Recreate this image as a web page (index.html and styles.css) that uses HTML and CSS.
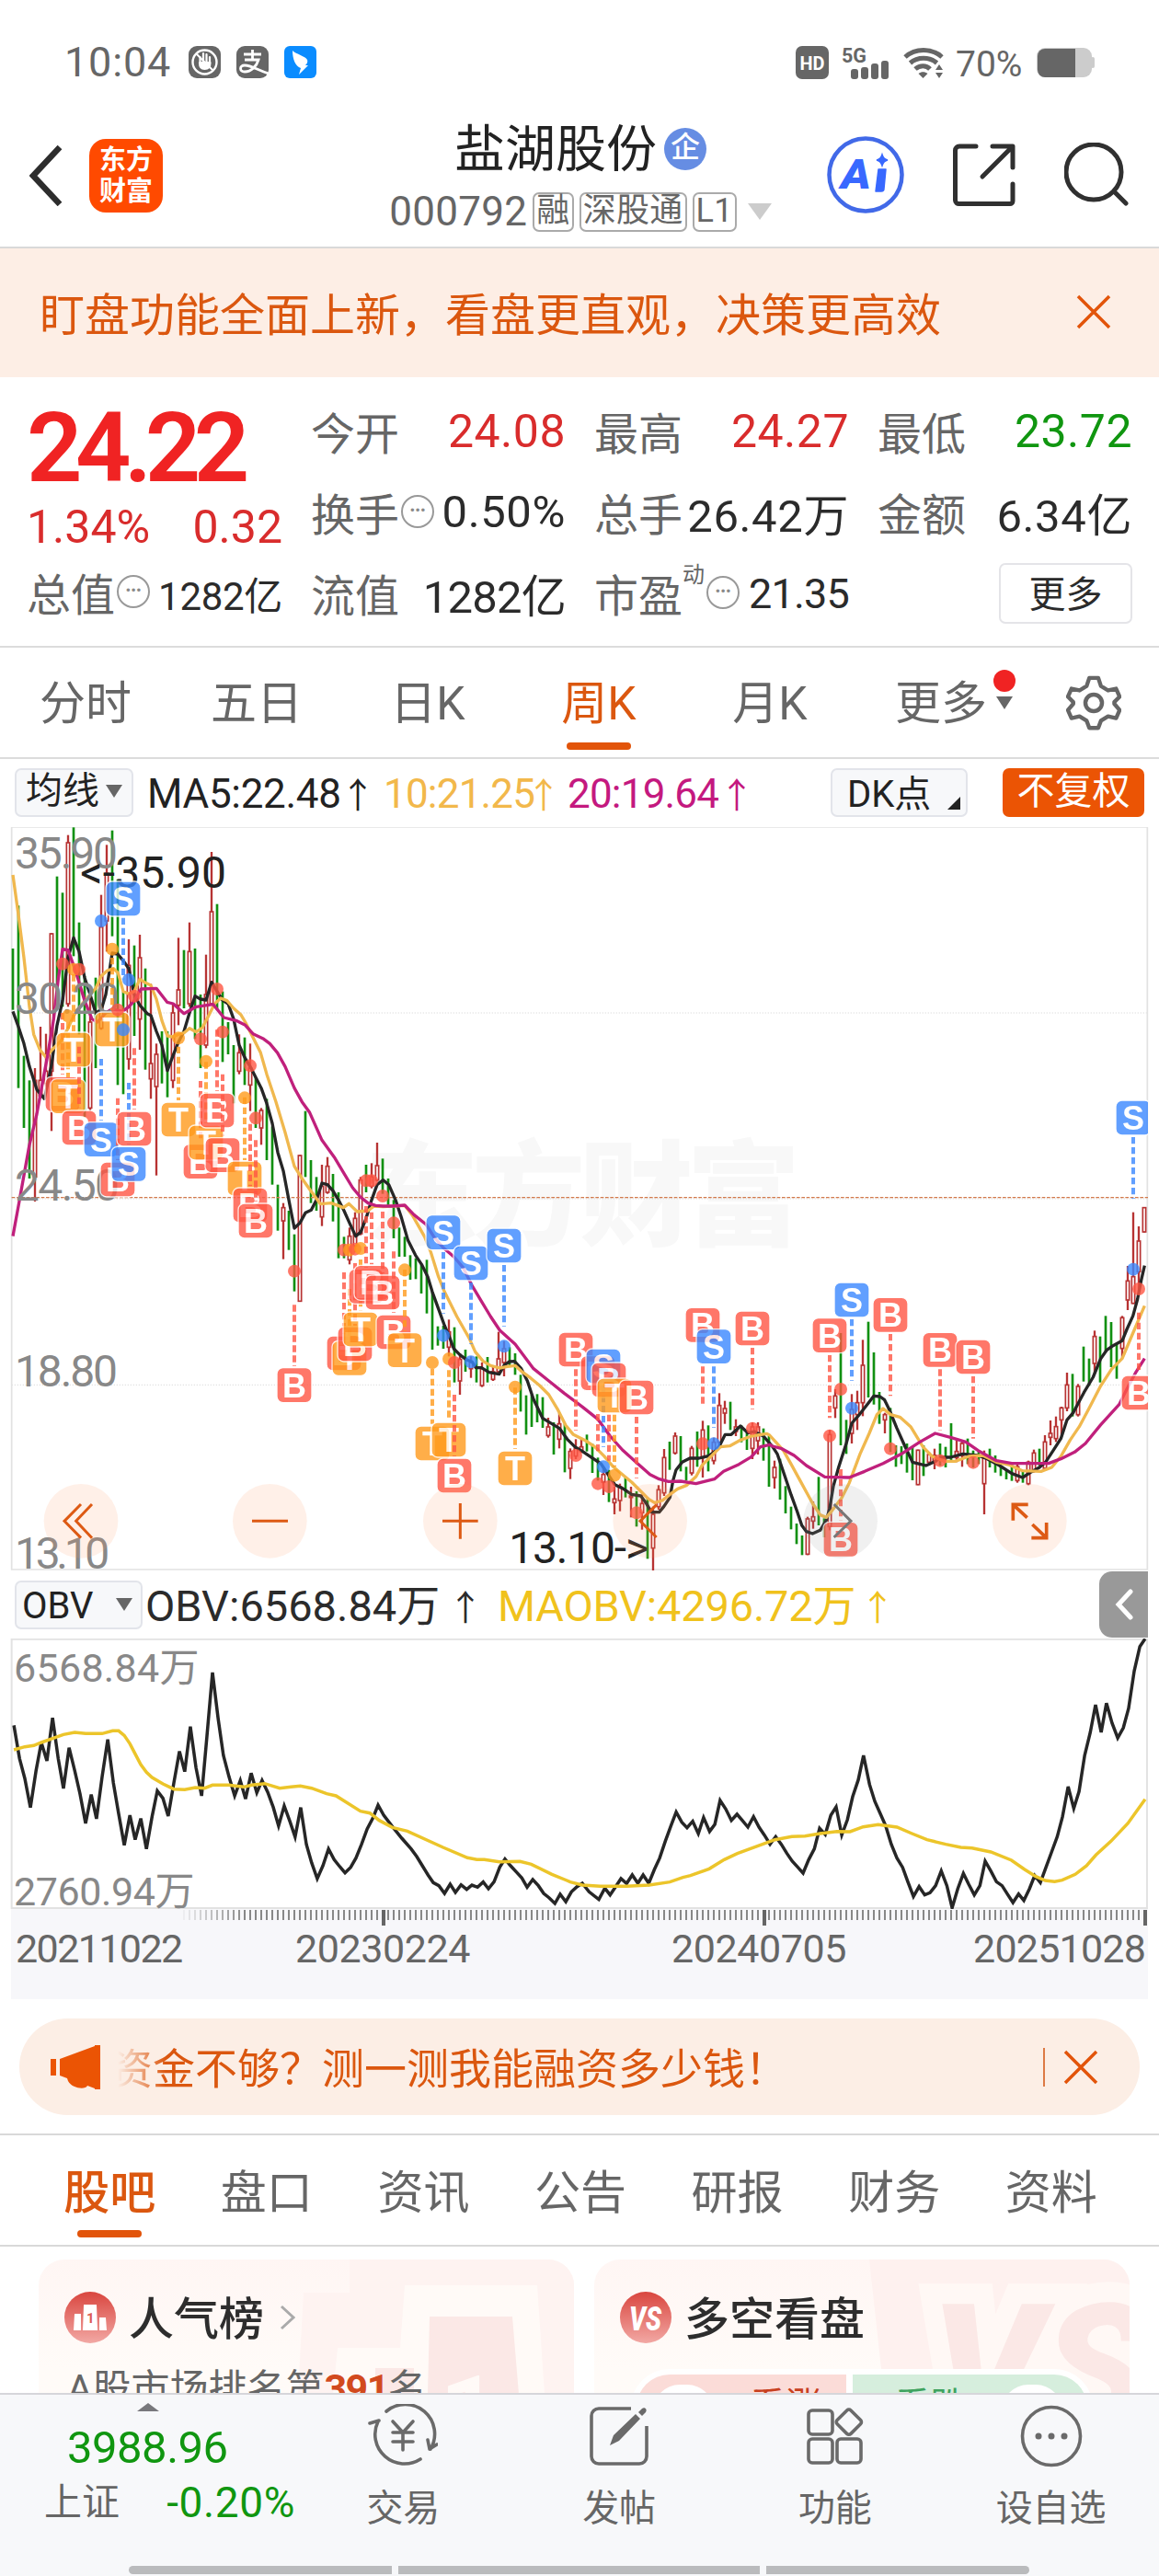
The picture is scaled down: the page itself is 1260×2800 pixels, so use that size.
FILE: index.html
```html
<!DOCTYPE html>
<html lang="zh-CN">
<head>
    <meta charset="UTF-8">
    <meta name="viewport" content="width=device-width, initial-scale=1.0">
    <title>盐湖股份 000792</title>
    <link rel="stylesheet" href="styles.css">
</head>
<body>
<div class="app">
    <!-- 状态栏 -->
    <div class="status">
        <span class="clock">10:04</span>
        <svg class="st-icon" viewBox="0 0 35 35" width="35" height="35">
            <rect width="35" height="35" rx="9" fill="#666"/>
            <circle cx="17.5" cy="17.5" r="13" fill="none" stroke="#fff" stroke-width="2.4"/>
            <path d="M12.500 19v-7M16 17v-9M19.500 17v-8M23 18v-6M12 18c0 5 2 7 5.500 7s6-2 6-7" fill="none" stroke="#fff" stroke-width="2.200" stroke-linecap="round"/>
            <path d="M12 17h11v4l-3 4h-5l-3-4z" fill="#fff"/>
            <path d="M8 8l19 19" stroke="#fff" stroke-width="2"/>
        </svg>
        <svg class="st-icon" viewBox="0 0 35 35" width="35" height="35">
            <rect width="35" height="35" rx="9" fill="#666"/>
            <path d="M8 9h19M17.500 4v11M9 15h15c-2 7-8 13-15 13-6 0-6-7 0-7 7 0 14 5 26 9" fill="none" stroke="#fff" stroke-width="2.800"/>
        </svg>
        <svg class="st-icon" viewBox="0 0 35 35" width="35" height="35">
            <rect width="35" height="35" rx="6" fill="#0a8cff"/>
            <path d="M9 5c4 4 14 6 16 10 1 3-1 5-2 6h3L16 31l2-7c-6-2-9-10-9-19z" fill="#fff"/>
        </svg>
        <div class="status-right">
            <svg viewBox="0 0 36 36" width="36" height="36">
                <rect width="36" height="36" rx="7" fill="#666"/>
                <text x="18" y="26" class="hd-text" text-anchor="middle" textLength="27" lengthAdjust="spacingAndGlyphs">HD</text>
            </svg>
            <svg class="signal" viewBox="0 0 52 36" width="52" height="36">
                <text x="0" y="17.500" class="g5-text" textLength="27" lengthAdjust="spacingAndGlyphs">5G</text>
                <rect x="10" y="25" width="8" height="11" rx="3"/><rect x="21" y="23" width="8" height="13" rx="3"/>
                <rect x="32" y="19" width="8" height="17" rx="3"/><rect x="43" y="16" width="8" height="20" rx="3"/>
            </svg>
            <svg class="wifi" viewBox="0 0 44 36" width="44" height="36" fill="none" stroke="#666" stroke-width="5">
                <path d="M2 12c11-10 29-10 40 0M7.500 18.500c8-7 21-7 29 0M13 25c5-4.500 12-4.500 16 0"/>
                <path d="M21.500 35l-5-5c3-2.500 7-2.500 10 0z" fill="#666" stroke="none"/>
                <path d="M35 26l4-6 4 6zM35 29l4 6 4-6z" fill="#666" stroke="none"/>
            </svg>
            <span class="percent">70%</span>
            <svg viewBox="0 0 64 34" width="64" height="34">
                <rect x="0" y="1" width="60" height="32" rx="9" fill="#ccc"/><rect x="59" y="11" width="4" height="12" rx="2" fill="#ccc"/>
                <path d="M9 2h33v31H9a8 8 0 0 1-8-8V10a8 8 0 0 1 8-8z" fill="#666"/>
            </svg>
        </div>
    </div>

    <!-- 顶部标题 -->
    <header class="header">
        <div class="header-left">
            <svg viewBox="0 0 36 66" width="36" height="66"><path d="M33 2L4 33l29 31" fill="none" stroke="#2d2d2d" stroke-width="6.500"/></svg>
            <div class="logo"><span>东方</span><span>财富</span></div>
        </div>
        <div class="header-center">
            <div class="stock-name">盐湖股份<span class="qi">企</span></div>
            <div class="stock-code">000792<span class="tag">融</span><span class="tag">深股通</span><span class="tag">L1</span><i class="tri-down tri-light"></i></div>
        </div>
        <div class="header-right">
            <svg viewBox="0 0 84 84" width="84" height="84">
                <circle cx="42" cy="42" r="39.500" fill="none" stroke="#4169e8" stroke-width="4.500"/>
                <text x="15" y="57" class="ai-text" textLength="33" lengthAdjust="spacingAndGlyphs">A</text>
                <path d="M56 36h8l-2 21a3 3 0 0 1-3 3h-6z" fill="#3868ff" stroke="#3868ff" stroke-width="1.500" stroke-linejoin="round"/>
                <path d="M60 20q1.500 5 6 6-4.500 1-6 6-1.500-5-6-6 4.500-1 6-6z" fill="#3868ff" stroke="#3868ff" stroke-width="1.500"/>
            </svg>
            <svg viewBox="0 0 70 70" width="70" height="70" fill="none" stroke="#303030" stroke-width="5" stroke-linecap="round" stroke-linejoin="round">
                <path d="M26 4H8a4.500 4.500 0 0 0-4.500 4.500v54A4 4 0 0 0 8 66.500h55a3 3 0 0 0 3-3V45M44 4h22v23M65 5L33 37"/>
            </svg>
            <svg viewBox="0 0 70 70" width="70" height="70" fill="none" stroke="#303030" stroke-width="5" stroke-linecap="round">
                <circle cx="32" cy="32" r="30"/><path d="M54 53l13 13"/>
            </svg>
        </div>
    </header>

    <div class="banner">
        <span>盯盘功能全面上新，看盘更直观，决策更高效</span>
        <svg viewBox="0 0 38 38" width="38" height="38"><path d="M2 2l34 34M36 2L2 36" stroke="#e2540a" stroke-width="3.500"/></svg>
    </div>

    <!-- 行情数据 -->
    <section class="quote">
        <div class="quote-main">
            <div class="price">24.22</div>
            <div class="change"><span>1.34%</span><span>0.32</span></div>
            <div class="cell"><span class="lab">总值</span><i class="dots">•••</i><b class="v43">1282亿</b></div>
        </div>
        <div class="quote-grid">
            <div class="cell"><span class="lab">今开</span><b class="up">24.08</b></div>
            <div class="cell"><span class="lab">最高</span><b class="up">24.27</b></div>
            <div class="cell"><span class="lab">最低</span><b class="down">23.72</b></div>
            <div class="cell"><span class="lab">换手</span><i class="dots">•••</i><b class="v48">0.50%</b></div>
            <div class="cell"><span class="lab">总手</span><b class="v48">26.42万</b></div>
            <div class="cell"><span class="lab">金额</span><b class="v48">6.34亿</b></div>
            <div class="cell"><span class="lab">流值</span><b class="v49">1282亿</b></div>
            <div class="cell"><span class="lab">市盈</span><small>动</small><i class="dots">•••</i><b class="v45">21.35</b></div>
            <div class="cell"><button class="more-btn">更多</button></div>
        </div>
    </section>

    <nav class="k-tabs">
        <span>分时</span><span>五日</span><span>日K</span><span class="active">周K</span><span>月K</span>
        <span class="more">更多<i class="red-dot"></i><i class="tri-down tri-dark"></i></span>
        <svg viewBox="0 0 60 62" width="60" height="62" fill="none" stroke="#666" stroke-width="4.500" stroke-linejoin="round">
            <path d="M25 3h10l3 9 8 5 9-2 4 9-6 6v2l6 7-4 9-9-2-8 5-3 8H25l-3-8-8-5-9 2-4-9 6-7v-2l-6-6 4-9 9 2 8-5z" transform="translate(1 1) scale(.97)"/>
            <circle cx="30" cy="31" r="9"/>
        </svg>
    </nav>

    <div class="ma-row">
        <span class="chip chip-ma">均线<i class="tri-down tri-dark"></i></span>
        <span class="ma ma5">MA5:22.48</span><i class="arr ma5">↑</i>
        <span class="ma ma10">10:21.25</span><i class="arr ma10">↑</i>
        <span class="ma ma20">20:19.64</span><i class="arr ma20">↑</i>
        <span class="chip chip-dk">DK点<i class="corner"></i></span>
        <span class="fq">不复权</span>
    </div>

    <!-- K线图 -->
    <svg class="kline" id="kline" viewBox="0 54 3780 2424" width="1260" height="808">
        <defs><clipPath id="plot"><rect x="24" y="54" width="3720" height="2424"/></clipPath></defs>
        <text class="watermark" x="1190" y="1390" textLength="1420">东方财富</text>
        <path class="grid" d="M38 660H3744M38 1266H3744M38 1873H3744"/>
        <path class="frame" d="M38 54H3742V2475H38Z"/>
        <g clip-path="url(#plot)">
            <g id="candles"></g>
            <path class="now" d="M38 1262H3744"/>
            <g id="lines"></g>
        </g>
        <g class="axis-label">
            <text x="48" y="190" textLength="336">35.90</text>
            <text x="48" y="662" textLength="342">30.20</text>
            <text x="48" y="1272" textLength="342">24.50</text>
            <text x="48" y="1878" textLength="336">18.80</text>
            <text x="48" y="2472" textLength="310">13.10</text>
        </g>
        <g class="peak">
            <text x="262" y="252" textLength="476">&lt;-35.90</text>
            <text x="1660" y="2455" textLength="455">13.10-&gt;</text>
        </g>
        <g id="marks" clip-path="url(#plot)"></g>
        <g class="ctrl">
            <circle cx="264" cy="2317" r="121"/><circle cx="880" cy="2317" r="121"/><circle cx="1501" cy="2317" r="121"/>
            <circle cx="2120" cy="2317" r="121"/><circle class="off" cx="2741" cy="2317" r="121"/><circle cx="3358" cy="2317" r="121"/>
            <path d="M264 2262L210 2317L264 2372M300 2262L248 2317L300 2372M822 2317H939M1443 2317H1559M1501 2259V2375M2141 2264L2088 2317L2141 2370"/>
            <path class="gray" d="M2720 2262L2775 2317L2720 2370"/>
            <path class="bold" d="M3304 2315V2263H3353M3304 2263L3350 2306M3364 2372H3413V2322M3413 2372L3367 2328"/>
        </g>
    </svg>

    <div class="obv-row">
        <span class="chip chip-obv">OBV<i class="tri-down tri-dark"></i></span>
        <span class="obv">OBV:6568.84万</span><i class="arr">↑</i>
        <span class="obv maobv">MAOBV:4296.72万</span><i class="arr maobv">↑</i>
        <span class="fold"><svg viewBox="0 0 20 34" width="20" height="34"><path d="M17 3L4 17l13 14" fill="none" stroke="#fff" stroke-width="5" stroke-linecap="round"/></svg></span>
    </div>

    <div class="obv-chart">
        <svg id="obv" viewBox="0 269 3087 882" width="1260" height="294" preserveAspectRatio="none"></svg>
        <span class="obv-max">6568.84万</span>
        <span class="obv-min">2760.94万</span>
    </div>

    <div class="axis">
        <svg id="ticks" viewBox="0 0 1260 24" width="1260" height="24"></svg>
        <div class="dates"><span>20211022</span><span>20230224</span><span>20240705</span><span>20251028</span></div>
    </div>

    <div class="notice">
        <svg viewBox="0 0 56 48" width="56" height="48" fill="#eb5404"><path d="M0 15h6v18H0zM10 15L48 1V0h6v48h-6v-1l-8-3c-2 5-17 3-21-5l-1-3-8-3z"/></svg>
        <span class="notice-text">资金不够？测一测我能融资多少钱！</span>
        <i class="divider"></i>
        <svg viewBox="0 0 38 38" width="38" height="38"><path d="M2 2l34 34M36 2L2 36" stroke="#e2540a" stroke-width="3.500"/></svg>
    </div>

    <nav class="info-tabs">
        <span class="active">股吧</span><span>盘口</span><span>资讯</span><span>公告</span><span>研报</span><span>财务</span><span>资料</span>
    </nav>

    <section class="cards">
        <div class="card">
            <svg class="card-bg" viewBox="0 0 582 146" width="582" height="146">
                <path d="M338 0H582V146H282L288 36H338Z" fill="#fef3f1"/>
                <path d="M398 28H542L550 146H320L325 96H393Z" fill="#fffaf7"/>
                <path d="M366 118H408V146H366ZM425 62H515L522 146H423Z" fill="#fbe8e6"/>
                <text x="436" y="204" font-size="110" class="bg-one">1</text>
            </svg>
            <div class="card-title">
                <svg viewBox="0 0 56 56" width="56" height="56">
                    <defs><linearGradient id="red" x1="0" y1="0" x2="0" y2="1"><stop offset="0" stop-color="#d9463f"/><stop offset="1" stop-color="#f2a8a4"/></linearGradient></defs>
                    <circle cx="28" cy="28" r="28" fill="url(#red)"/>
                    <path d="M11 24h7v18h-8zM21 14h14l1 28H20zM38 28h7l1 14h-8z" fill="#fff"/>
                    <text x="24" y="34" class="podium">1</text>
                </svg>
                <span>人气榜</span>
                <svg class="chev" viewBox="0 0 18 28" width="18" height="28"><path d="M2 2l13 12L2 26" fill="none" stroke="#aaa" stroke-width="3"/></svg>
            </div>
            <div class="rank">A股市场排名第<b>391</b>名</div>
        </div>
        <div class="card">
            <svg class="card-bg" viewBox="0 0 582 146" width="582" height="146">
                <path d="M299 0H582V146H315Z" fill="#fef1ef"/>
                <text x="366" y="184" class="bg-vs">VS</text>
            </svg>
            <div class="card-title">
                <svg viewBox="0 0 56 56" width="56" height="56">
                    <circle cx="28" cy="28" r="28" fill="url(#red)"/>
                    <text x="10" y="42" class="vs-text" textLength="35" lengthAdjust="spacingAndGlyphs">VS</text>
                </svg>
                <span>多空看盘</span>
            </div>
            <div class="vote">
                <div class="vote-up"><i></i>看涨</div>
                <div class="vote-down">看跌<i></i></div>
            </div>
        </div>
    </section>

    <footer class="footer">
        <div class="index">
            <i class="tri-up"></i>
            <div class="index-value">3988.96</div>
            <div class="index-row"><span>上证</span><b>-0.20%</b></div>
        </div>
        <div class="foot-item">
            <svg viewBox="0 0 76 70" width="76" height="70" fill="none" stroke="#6a6a6a" stroke-width="3.600" stroke-linecap="round" stroke-linejoin="round">
                <path d="M20 8a32 32 0 0 1 48 41M57 60A32 32 0 0 1 11 19M2 21l10-3M75 44l-8 5-2-10"/>
                <path d="M27 19l11 12 11-12M38 31v19M27 31h22M27 41h22"/>
            </svg>
            <span>交易</span>
        </div>
        <div class="foot-item">
            <svg viewBox="0 0 66 66" width="66" height="66" fill="none" stroke="#6a6a6a" stroke-width="3.600">
                <path d="M46 3H11a8 8 0 0 0-8 8v44a8 8 0 0 0 8 8h44a8 8 0 0 0 8-8V22"/>
                <path d="M23 43l4-11 24-23 5 5-23 24zM54 7l4-4c3-2 6 1 4 4l-4 4z" fill="#6a6a6a" stroke="none"/>
            </svg>
            <span>发帖</span>
        </div>
        <div class="foot-item">
            <svg viewBox="0 0 62 62" width="62" height="62" fill="none" stroke="#6a6a6a" stroke-width="3.600" stroke-linejoin="round">
                <rect x="2" y="3" width="26" height="26" rx="4"/><rect x="2" y="34" width="26" height="26" rx="4"/><rect x="33" y="34" width="26" height="26" rx="4"/>
                <rect x="35" y="5" width="21" height="21" rx="3" transform="rotate(45 45.500 16)"/>
            </svg>
            <span>功能</span>
        </div>
        <div class="foot-item">
            <svg viewBox="0 0 68 68" width="68" height="68" fill="#6a6a6a">
                <circle cx="34" cy="34" r="31.500" fill="none" stroke="#6a6a6a" stroke-width="3.600"/>
                <circle cx="20" cy="34" r="3.500"/><circle cx="34" cy="34" r="3.500"/><circle cx="48" cy="34" r="3.500"/>
            </svg>
            <span>设自选</span>
        </div>
        <div class="home-bar"><i></i><i></i><i></i></div>
    </footer>
</div>
<script src="script.js"></script>
</body>
</html>
```
FILE: styles.css
```css
* {
    box-sizing: border-box;
}
body {
    margin: 0;
    background-color: #fff;
    font-family: Roboto, 'Noto Sans CJK SC', sans-serif;
    color: #2b2b2b;
}
i, b {
    font-style: normal;
    font-weight: 400;
}
svg {
    display: block;
    flex: none;
}
.app {
    width: 1260px;
    height: 2800px;
    overflow: hidden;
    display: flex;
    flex-direction: column;
    white-space: nowrap;
}
.app > * {
    flex: none;
}
.tri-down {
    width: 0;
    height: 0;
    border-left: 9px solid transparent;
    border-right: 9px solid transparent;
    border-top: 14px solid #666;
}
.tri-light {
    border-left-width: 13px;
    border-right-width: 13px;
    border-top: 18px solid #ccc;
    margin-left: 12px;
}

/* status bar */
.status {
    height: 126px;
    padding: 9px 69px 0 70px;
    display: flex;
    align-items: center;
    color: #666;
}
.clock {
    font-size: 45px;
    letter-spacing: 0.8px;
    width: 118px;
    margin-right: 17px;
}
.st-icon {
    margin-right: 17px;
}
.status-right {
    margin-left: auto;
    display: flex;
    align-items: center;
}
.hd-text {
    font: 700 21px Roboto, sans-serif;
    fill: #fff;
}
.signal {
    margin-left: 14px;
    fill: #666;
    overflow: visible;
}
.g5-text {
    font: 700 22px Roboto, sans-serif;
}
.wifi {
    margin-left: 15px;
}
.percent {
    font-size: 39px;
    width: 76px;
    margin: 4px 12px 0 13px;
}

/* header */
.header {
    height: 144px;
    display: flex;
    border-bottom: 2px solid #d9d9d9;
}
.header-left {
    width: 360px;
    padding-left: 32px;
    display: flex;
    align-items: center;
    padding-bottom: 12px;
}
.logo {
    width: 80px;
    height: 80px;
    margin-left: 29px;
    border-radius: 18px;
    background-color: #ff4a00;
    color: #fff;
    display: flex;
    flex-direction: column;
    justify-content: center;
    align-items: center;
    font-size: 29px;
    font-weight: 700;
    line-height: 34px;
}
.header-center {
    width: 540px;
    display: flex;
    flex-direction: column;
    align-items: center;
    padding: 2px 0 0 2px;
}
.stock-name {
    font-size: 55px;
    line-height: 68px;
    display: flex;
    align-items: center;
    color: #222;
}
.qi {
    width: 46px;
    height: 46px;
    margin-left: 8px;
    border-radius: 50%;
    background-color: #668de3;
    color: #fff;
    font-size: 32px;
    line-height: 43px;
    text-align: center;
    font-weight: 500;
}
.stock-code {
    font-size: 44px;
    letter-spacing: 0.3px;
    line-height: 68px;
    color: #666;
    display: flex;
    align-items: center;
}
.tag {
    border: 2px solid #aaa;
    border-radius: 7px;
    font-size: 36px;
    line-height: 37px;
    height: 43px;
    padding: 0 2px;
    margin-left: 6px;
}
.header-right {
    width: 360px;
    padding: 0 33px 15px 0;
    display: flex;
    align-items: center;
    justify-content: flex-end;
    gap: 52px;
}
.ai-text {
    font: italic 900 44px Roboto, sans-serif;
    fill: #3868ff;
}
.banner {
    height: 140px;
    padding: 0 52px 3px 43px;
    display: flex;
    align-items: center;
    justify-content: space-between;
    background-color: #fdeee5;
    color: #db570f;
    font-size: 49px;
}

/* quote */
.quote {
    height: 294px;
    padding: 16px 29px 0 29px;
    display: flex;
    justify-content: space-between;
    border-bottom: 2px solid #dcdcdc;
}
.quote-main {
    width: 278px;
}
.price {
    height: 117px;
    line-height: 122px;
    font-size: 106px;
    font-weight: 600;
    letter-spacing: -7.5px;
    color: #f02323;
}
.change {
    height: 58px;
    line-height: 60px;
    display: flex;
    justify-content: space-between;
    font-size: 50px;
    color: #d92c2c;
}
.quote-grid {
    display: grid;
    grid-template-columns: repeat(3, 277px);
    grid-auto-rows: 88px;
    column-gap: 31px;
}
.cell {
    height: 88px;
    display: flex;
    align-items: center;
    font-size: 50px;
    padding-bottom: 2px;
}
.cell .lab {
    font-size: 48px;
    margin-top: -3px;
    color: #666;
}
.cell b {
    margin-left: auto;
    letter-spacing: 0.5px;
}
.cell .v48 {
    font-size: 49px;
    letter-spacing: 0.6px;
    margin-top: -2px;
}
.cell .v49 {
    font-size: 49px;
    letter-spacing: -0.8px;
    margin-top: -2px;
}
.cell .v45 {
    font-size: 45px;
    letter-spacing: -0.8px;
}
.cell .v43 {
    font-size: 42px;
    letter-spacing: -0.3px;
}
.cell .up {
    color: #d92c2c;
}
.cell .down {
    color: #109610;
}
.cell small {
    font-size: 24px;
    color: #666;
    margin-top: -46px;
}
.dots {
    width: 36px;
    height: 36px;
    margin: -3px 0 0 2px;
    border: 2.5px solid #999;
    border-radius: 50%;
    font-size: 17px;
    line-height: 29px;
    text-align: center;
    color: #888;
}
.more-btn {
    margin-left: auto;
    width: 145px;
    height: 66px;
    border: 2px solid #e4e4e8;
    border-radius: 7px;
    background-color: #fff;
    font: 40px 'Noto Sans CJK SC', sans-serif;
    line-height: 56px;
    color: #2b2b2b;
    padding: 0 0 4px;
}

/* period tabs */
.k-tabs {
    height: 121px;
    display: flex;
    align-items: center;
    border-bottom: 2px solid #dcdcdc;
    font-size: 50px;
    color: #666;
}
.k-tabs span {
    width: 186px;
    height: 119px;
    line-height: 123px;
    text-align: center;
    position: relative;
}
.k-tabs svg {
    margin-left: 43px;
}
.active {
    color: #db570f;
    position: relative;
}
.active::after {
    content: '';
    position: absolute;
    left: 50%;
    bottom: 8px;
    width: 70px;
    height: 8px;
    margin-left: -35px;
    border-radius: 4px;
    background-color: #e2540a;
}
.red-dot {
    position: absolute;
    left: 150px;
    top: 24px;
    width: 24px;
    height: 24px;
    border-radius: 50%;
    background-color: #f02323;
}
.more .tri-dark {
    position: absolute;
    left: 153px;
    top: 53px;
}

/* indicator rows */
.ma-row, .obv-row {
    display: flex;
    align-items: center;
    height: 73px;
    padding-left: 16px;
    font-size: 44px;
}
.chip {
    height: 53px;
    display: flex;
    align-items: center;
    border: 2px solid #e2e4ea;
    border-radius: 7px;
    background-color: #f7f8fa;
    font-size: 40px;
    color: #222;
}
.chip-ma {
    width: 129px;
    padding-left: 10px;
    line-height: 46px;
    padding-bottom: 3px;
}
.chip-ma .tri-down {
    margin-left: 7px;
}
.ma {
    letter-spacing: -0.3px;
    padding-top: 2px;
}
.ma5 {
    color: #222;
}
.ma10 {
    color: #f2b84b;
}
.ma20 {
    color: #c4197f;
}
.ma.ma5 {
    width: 211px;
    margin-left: 15px;
}
.ma.ma10 {
    width: 158px;
    letter-spacing: -0.8px;
}
.ma.ma20 {
    width: 166px;
    letter-spacing: -0.8px;
}
.arr {
    width: 46px;
    font: 38px 'Noto Sans CJK SC', sans-serif;
    text-align: center;
    margin-left: -5px;
    margin-right: 5px;
}
.arr.ma10 {
    width: 42px;
}
.chip-dk {
    width: 149px;
    margin-left: auto;
    padding: 0 0 3px 16px;
    position: relative;
}
.corner {
    position: absolute;
    right: 6px;
    bottom: 6px;
    border-left: 14px solid transparent;
    border-bottom: 14px solid #222;
}
.fq {
    width: 154px;
    height: 53px;
    margin: 0 16px 0 38px;
    border-radius: 7px;
    background-color: #eb5404;
    color: #fff;
    font-size: 41px;
    line-height: 50px;
    text-align: center;
}

/* kline */
.kline {
    margin-top: 1px;
}
.watermark {
    font: 900 370px 'Noto Sans CJK SC', sans-serif;
    fill: #f8f8f8;
}
.grid {
    stroke: #ddd;
    stroke-width: 3;
    stroke-dasharray: 4 5;
}
.frame {
    fill: none;
    stroke: #e2e2e2;
    stroke-width: 5;
}
.now {
    stroke: #d27a4c;
    stroke-width: 3.5;
    stroke-dasharray: 11 5;
}
.axis-label, .peak {
    font-size: 144px;
    fill: #888;
}
.peak {
    fill: #222;
}
.candle-up {
    fill: none;
    stroke: #b73333;
    stroke-width: 7;
}
.candle-up rect {
    fill: #fff;
    stroke-width: 5;
}
.candle-down {
    stroke: #119011;
    stroke-width: 8;
}
.line {
    fill: none;
    stroke-width: 10;
    stroke-linejoin: round;
}
.stem {
    stroke-width: 12;
    stroke-dasharray: 22 11;
    opacity: 0.8;
}
.badge text {
    font: 700 108px 'Liberation Sans', sans-serif;
    text-anchor: middle;
    fill: #fff;
}
.badge rect {
    stroke: #fff;
    stroke-width: 4;
}
.badge {
    opacity: 0.8;
}
.ctrl circle {
    fill: #ff9a66;
    opacity: 0.15;
}
.ctrl .off {
    fill: #999;
}
.ctrl path {
    fill: none;
    stroke: #dd5a14;
    stroke-width: 9;
}
.ctrl .gray {
    stroke: #777;
}
.ctrl .bold {
    stroke-width: 11;
}
.obv-row {
    height: 74px;
    position: relative;
}
.chip-obv {
    width: 139px;
    padding-left: 6px;
    padding-top: 2px;
}
.chip-obv .tri-down {
    margin: -2px 9px 0 auto;
}
.obv {
    font-size: 47px;
    width: 326px;
    margin-left: 3px;
    padding-bottom: 5px;
}
.obv-row .arr {
    width: 54px;
}
.obv.maobv {
    width: 391px;
    letter-spacing: -0.2px;
}
.maobv {
    color: #f0c21c;
}
.fold {
    position: absolute;
    left: 1195px;
    top: 1px;
    width: 53px;
    height: 72px;
    border-radius: 14px 0 0 14px;
    background-color: #999;
    display: flex;
    align-items: center;
    justify-content: center;
}
.obv-chart {
    height: 293px;
    position: relative;
}
.obv-max, .obv-min {
    position: absolute;
    left: 15px;
    font-size: 43px;
    line-height: 50px;
    color: #888;
}
.obv-max {
    top: 7px;
    letter-spacing: 0.3px;
}
.obv-min {
    top: 250px;
    letter-spacing: -0.4px;
}
.obv-line {
    fill: none;
    stroke-width: 3.5;
    vector-effect: non-scaling-stroke;
}
.obv-frame {
    fill: none;
    stroke: #e2e2e2;
    stroke-width: 2;
    vector-effect: non-scaling-stroke;
}
.axis {
    height: 99px;
    background: linear-gradient(#f7f7fa, #f7f7fa) 12px 0 / 1236px 100% no-repeat;
}
.dates {
    display: grid;
    grid-template-columns: 304px 409px 1fr auto;
    padding: 0 15px 0 17px;
    font-size: 43px;
    line-height: 40px;
    letter-spacing: -0.4px;
    color: #666;
}
.dates span:first-child {
    letter-spacing: -1.6px;
}
.dates span:last-child {
    letter-spacing: -0.8px;
}

/* notice */
.notice {
    height: 105px;
    margin: 21px 21px 20px 21px;
    padding: 0 45px 0 34px;
    border-radius: 53px;
    background-color: #fceee5;
    display: flex;
    align-items: center;
    color: #db570f;
}
.notice-text {
    margin-left: 9px;
    padding-bottom: 4px;
    font-size: 46px;
    -webkit-mask-image: linear-gradient(90deg, transparent 8px, #000 60px);
    mask-image: linear-gradient(90deg, transparent 8px, #000 60px);
}
.divider {
    width: 2px;
    height: 42px;
    margin: 0 20px 0 auto;
    background-color: #dd7a45;
}
.info-tabs {
    height: 123px;
    border-top: 2px solid #d9d9d9;
    border-bottom: 2px solid #d9d9d9;
    padding: 0 32px 0 34px;
    display: flex;
    font-size: 50px;
    line-height: 127px;
    color: #666;
}
.info-tabs span {
    flex: 1;
    height: 119px;
    text-align: center;
}
.info-tabs .active {
    color: #db570f;
    font-weight: 500;
}

/* cards */
.cards {
    height: 159px;
    padding: 14px 32px 0 42px;
    display: flex;
    gap: 22px;
    overflow: hidden;
}
.card {
    width: 582px;
    height: 260px;
    border-radius: 28px;
    background: linear-gradient(#fff6f4, #fffbf8 120px);
    position: relative;
    overflow: hidden;
}
.card-bg {
    position: absolute;
    left: 0;
    top: 0;
}
.bg-one {
    font-weight: 700;
    fill: #fffaf7;
}
.bg-vs {
    font: italic 900 190px Roboto, sans-serif;
    fill: #fbe8e6;
    stroke: #fff8f5;
    stroke-width: 44;
    paint-order: stroke;
}
.card-title {
    position: relative;
    display: flex;
    align-items: center;
    height: 56px;
    margin: 35px 0 0 28px;
    font-size: 49px;
    font-weight: 500;
    color: #2d2d2d;
}
.card-title span {
    margin: -6px 0 0 14px;
}
.card-title .chev {
    margin-left: 17px;
}
.podium {
    font: 700 15px Roboto, sans-serif;
    fill: #dc5a54;
}
.vs-text {
    font: italic 900 36px Roboto, sans-serif;
    fill: #fff;
}
.rank {
    position: relative;
    margin: 21px 0 0 31px;
    font-size: 42px;
    line-height: 56px;
    color: #666;
}
.rank b {
    font-weight: 700;
    font-size: 43px;
    letter-spacing: -1.5px;
    color: #d24a1e;
}
.vote {
    position: relative;
    width: 502px;
    height: 84px;
    margin: 28px 0 0 40px;
    border: 6px solid #fff;
    border-radius: 42px;
    background-color: #fff;
    overflow: hidden;
    display: flex;
    gap: 7px;
    font-size: 39px;
    line-height: 68px;
}
.vote div {
    flex: 1;
    display: flex;
}
.vote i {
    width: 66px;
    height: 58px;
    margin-top: 11px;
    border-radius: 33px;
    background-color: #fff;
}
.vote-up {
    background-color: #fbdcd8;
    color: #c8401e;
    padding-left: 18px;
}
.vote-up i {
    margin-right: 39px;
}
.vote-down {
    background-color: #d6eedd;
    color: #3ea35f;
    padding-left: 46px;
}
.vote-down i {
    margin-left: 38px;
}

/* footer */
.footer {
    height: 200px;
    border-top: 2px solid #d6d6da;
    background-color: #f7f8fa;
    display: flex;
    position: relative;
}
.index {
    width: 321px;
    color: #109610;
}
.tri-up {
    display: block;
    width: 0;
    margin: 9px 0 0 149px;
    border-left: 12px solid transparent;
    border-right: 12px solid transparent;
    border-bottom: 9px solid #78787c;
}
.index-value {
    padding-left: 73px;
    font-size: 49px;
    line-height: 80px;
    letter-spacing: -0.5px;
}
.index-row {
    display: flex;
    justify-content: space-between;
    padding: 0 0 0 48px;
    font-size: 46px;
    letter-spacing: 0.6px;
    line-height: 38px;
}
.index-row span {
    font-size: 41px;
    letter-spacing: 0;
    color: #666;
}
.foot-item {
    flex: 1;
    display: flex;
    flex-direction: column;
    align-items: center;
    color: #666;
    font-size: 40px;
}
.foot-item svg {
    margin-top: 10px;
    height: 70px;
}
.foot-item span {
    line-height: 88px;
}
.home-bar {
    position: absolute;
    left: 140px;
    bottom: 3px;
    width: 979px;
    display: grid;
    grid-template-columns: 286px 393px 286px;
    column-gap: 7px;
}
.home-bar i {
    height: 9px;
    background-color: #babbbd;
}
.home-bar i:first-child {
    border-radius: 5px 0 0 5px;
}
.home-bar i:last-child {
    border-radius: 0 5px 5px 0;
}
```
FILE: script.js
```javascript
const NS = 'http://www.w3.org/2000/svg';

function add(parent, tag, attrs, text) {
    const el = document.createElementNS(NS, tag);
    for (const k in attrs) el.setAttribute(k, attrs[k]);
    if (text) el.textContent = text;
    parent.appendChild(el);
    return el;
}

// 每根K线: g = 跌 [高, 低], r = 涨 [高, 低, 实体上, 实体下]
const early = `g450 650|g310 905|g800 1035|g880 1200|r840 1275 880 1195|r705 940 880 930|r728 900 850 890|r400 1045 402 850|g215 650|g268 640|r80 640 105 630|g55 475|g365 730|g540 1000|r600 980 690 970|g545 840|r275 715 380 710|r112 460 205 360|g65 410|g225 895|g590 925|r420 845 505 810|g440 735|r405 780 480 680|g515 845|r565 940 825 875|r760 1190 795 900|g720 890|g720 935|r630 905 660 880|r415 700 585 635|g455 645|r365 640 460 630|g450 745|g600 840|r470 775 600 765|r135 635 330 630|g305 650|g590 820|g690 795|g765 955|r730 860 790 850|g740 895|r760 980 840 895|g870 1035|r970 1090 978 1035|g940 1140|g1030 1220|g1220 1370`;
const later = `r320 503 335 378|g345 473|g422 608|r163 642 165 640|g20 235|g180 320|g235 345|r195 395 265 365|r170 290 200 285|g225 380|g285 500|g430 500|r400 520 428 505|r350 480 370 460|r235 425 245 420|g195 285|r190 272 235 265|r123 250 198 245|g175 290|g240 330|g310 435|g400 495|g430 495|g490 570|g500 568|g520 615|g505 680|g610 798|g722 785|g720 795|r700 820 740 790|g725 905|r810 945 830 900|g798 870|r820 890 840 860|g820 905|r840 920 860 915|g822 905|r850 900 870 895|r740 880 828 870|r770 885 795 840|g790 855|g810 880|g880 1000|g947 1075|g945 1050|g943 1035|g953 1053|r1020 1085 1050 1078|g1035 1140|r1005 1120 1040 1090|g1040 1198|r1120 1220 1130 1185|r1090 1155 1120 1145|r1085 1135 1115 1130|g1075 1130|g1105 1200|g1150 1225|r1180 1272 1205 1230|g1190 1295|r1245 1335 1285 1297|r1235 1325 1245 1290|g1213 1280|r1245 1345 1275 1280|g1260 1375|r1270 1385 1300 1330|g1280 1480|r1310 1520 1335 1445|r1240 1320 1255 1310|r1122 1275 1150 1265|g1098 1190|r1068 1140 1080 1135|g1080 1195|g1180 1225|r1112 1208 1120 1200|g1065 1180|r1030 1215 1060 1150|g1045 1195|r1085 1172 1100 1160|r940 1110 980 1100|r965 1040 990 1005|g968 1060|r1025 1080 1050 1065|g1045 1100|g1060 1125|r1035 1155 1050 1120|r1035 1140 1050 1095|g1055 1160|g1080 1245|r1160 1251 1182 1215|g1154 1287|g1243 1332|g1310 1384|g1365 1432|g1404 1468|r1343 1468 1350 1465|r1293 1382 1343 1357|g1213 1371|g1348 1410|r1060 1387 1075 1375|r927 1021 949 988|g744 1110|g1027 1138|r943 1104 993 1071|r932 1060 971 1010|r766 1015 849 971|g707 954|g807 977|g936 1040|r1004 1071 1010 1027|g988 1132|g1110 1180|g1113 1171|g1104 1199|g1115 1224|r1124 1240 1126 1238|g1110 1210|r1132 1176 1140 1165|r1121 1188 1143 1165|g1104 1176|g1115 1182|g1038 1165|r1093 1165 1130 1150|r1093 1180 1104 1143|g1088 1171|g1127 1182|g1127 1171|r1127 1335 1149 1235|g1121 1182|g1143 1199|g1176 1210|g1188 1221|g1171 1226|r1171 1232 1180 1225|g1193 1232|r1160 1240 1165 1235|r1124 1199 1135 1190|g1121 1176|r1077 1193 1099 1185|r1029 1110 1071 1084|r1016 1099 1049 1088|r984 1082 988 1027|r873 999 913 988|g877 1016|r910 1016 918 1010|g788 902|g827 916|r736 877 755 843|g755 905|g688 805|g708 855|g777 893|r688 827 694 794|r525 669 574 636|r350 649 560 647|r396 605 444 544|r333 416 335 414`;

const candles = document.getElementById('candles');
const up = add(candles, 'g', { class: 'candle-up' });
const down = add(candles, 'g', { class: 'candle-down' });
function drawCandles(src, start, dy) {
    src.split('|').forEach((s, n) => {
        const x = 42 + (start + n) * 18;
        const v = s.slice(1).split(' ').map((t) => Number(t) + dy);
        if (s[0] === 'g') {
            add(down, 'path', { d: `M${x} ${v[0]}V${v[1]}` });
        } else {
            add(up, 'path', { d: `M${x} ${v[0]}V${v[1]}` });
            add(up, 'rect', { x: x - 5, y: v[2], width: 10, height: v[3] - v[2] });
        }
    });
}
drawCandles(early, 0, 0);
drawCandles(later, 49, 960);

// 折线分段存放, 每段带自己的原点偏移
function joinSegments(segs) {
    return segs.map(([dx, dy, pts]) => pts.split(' ').map((p) => {
        const [x, y] = p.split(',').map(Number);
        return `${x + dx},${y + dy}`;
    }).join(' ')).join(' ');
}

const ma5 = [
    [0, 0, '42,655 60,705 78,760 96,835 120,910 145,940 168,830 186,700 204,620 222,480 240,415 258,460 276,545 294,600 312,660 330,650 345,600 366,465 384,468 402,490 420,515 438,600 456,635 480,662 492,668 510,720 528,765 546,848 564,800 582,755 600,720 618,660 636,605 654,615 672,618 690,560 708,590 726,618 744,630 762,680 780,765 798,805 816,835 852,905 870,955 888,1020 906,1115 924,1175 942,1270 960,1362 978,1345 996,1312 1015,1303 1032,1270 1050,1215 1068,1220 1086,1240 1104,1270 1122,1305 1140,1345 1160,1388 1176,1375 1194,1330 1212,1270 1230,1220'],
    [1200, 960, '50,245 68,260 90,310 110,370 130,440 155,490 175,520 195,560 210,610 230,665 250,720 265,755 280,795 300,815 320,830 340,838 352,857 370,857 395,872 428,878 445,848 462,837 478,836 500,860 520,900 540,960 570,1022 600,1040 625,1055 650,1090 675,1115 700,1130 730,1150 760,1170 780,1200 805,1238 830,1250 860,1270 890,1275 905,1295 925,1328 950,1328 965,1310 985,1280 995,1225 1005,1190 1025,1165 1050,1152 1080,1152 1110,1145 1125,1135 1145,1115 1165,1075 1185,1075 1215,1047 1240,1070 1260,1065 1290,1080 1320,1115'],
    [2460, 960, '75,1138 90,1182 105,1226 120,1271 140,1326 155,1371 170,1391 190,1398 215,1387 235,1354 246,1315 258,1243 275,1182 300,1104 318,1038 340,1013 360,988 390,949 410,951 425,962 440,993 465,1054 490,1110 516,1165 540,1171 560,1176 585,1165 610,1149 640,1149 680,1138 730,1143 760,1154 800,1176 840,1202 875,1215 900,1199 930,1182 950,1165 975,1127 1000,1088 1020,1027 1040,1004 1075,938 1105,888 1130,827 1150,799 1170,785 1200,769 1215,732 1235,688 1250,633 1262,572 1273,524']
];
const ma10 = [
    [0, 0, '42,210 60,340 78,480 96,640 110,730 130,780 150,805 170,780 200,750 222,710 240,670 276,620 312,580 330,540 350,522 370,515 385,530 402,590 420,598 438,590 456,550 475,562 492,570 510,615 528,685 546,735 565,738 582,730 600,725 618,710 640,722 660,708 680,670 700,630 720,612 740,620 762,645 785,665 800,690 820,730 850,790 870,860 900,950 930,1050 960,1160 985,1200 1010,1235 1045,1283 1080,1280 1120,1295 1138,1282 1165,1308 1200,1305'],
    [1200, 960, '20,330 50,332 120,328 145,360 165,395 185,430 205,480 230,560 250,610 290,690 330,760 350,805 375,835 400,850 430,858 455,853 480,850 500,868 530,890 560,915 590,945 620,995 645,1045 670,1075 710,1095 740,1115 770,1145 800,1180 830,1205 860,1230 890,1260 915,1285 935,1297 960,1290 985,1270 1010,1252 1040,1240 1070,1212 1090,1175 1120,1145 1150,1115 1180,1112 1215,1093 1250,1080 1300,1072'],
    [2460, 960, '50,1077 70,1099 95,1127 120,1171 150,1226 190,1299 215,1337 235,1345 255,1321 285,1282 310,1232 345,1138 375,1071 400,1010 420,990 445,1010 475,1018 510,1049 550,1115 580,1146 620,1162 655,1162 700,1146 745,1143 790,1165 830,1173 875,1193 935,1195 970,1182 1000,1146 1030,1093 1060,1049 1090,993 1130,916 1165,862 1200,827 1235,744 1273,655']
];
const ma20 = [
    [0, 0, '42,1388 60,1290 78,1190 96,1090 120,990 140,880 155,800 175,680 190,550 204,452 222,455 240,505 258,560 276,620 300,680 318,690 345,660 365,648 400,655 420,640 438,620 460,582 510,580 545,625 565,630 600,662 640,640 695,632 730,675 770,685 800,700 825,728 860,745 880,760 905,790 930,835 960,905 985,950 1010,985 1050,1075 1090,1130 1120,1180 1150,1230 1175,1260 1200,1280'],
    [1200, 960, '25,328 50,330 80,330 120,327 150,358 190,390 215,430 245,465 280,495 310,530 340,590 370,640 400,690 430,735 480,780 540,860 590,900 640,940 700,985 750,1025 790,1080 830,1125 880,1170 920,1205 950,1220 980,1228 1020,1227 1070,1235 1130,1220 1160,1195 1210,1172 1250,1148 1280,1115 1310,1108'],
    [2460, 960, '60,1113 90,1121 130,1143 170,1176 230,1213 310,1215 360,1195 420,1169 480,1138 540,1099 590,1071 640,1084 690,1099 730,1127 790,1160 840,1169 900,1169 960,1169 1000,1154 1045,1132 1080,1104 1130,1043 1190,977 1215,927 1245,871 1273,827']
];
const lines = document.getElementById('lines');
[[ma5, '#262626'], [ma10, '#f0b84e'], [ma20, '#c0207c']].forEach(([segs, stroke]) => {
    add(lines, 'polyline', { class: 'line', points: joinSegments(segs), stroke });
});

// 买卖点: 类型, x, 标签中心y, 虚线起止, 圆点y
const COLORS = { B: '#ff5644', S: '#3a88ff', T: '#ff9b1c' };
const MARKS = [
    ['B', 204, 925, 660, 860, 500], ['T', 222, 932, 690, 870, 670], ['T', 240, 780, 535, 720, 518],
    ['B', 258, 1035, 770, 970, 518], ['S', 330, 1073, 810, 1010, 360], ['T', 366, 714, 480, 650, 452],
    ['B', 384, 1203, 938, 1140, 650], ['S', 402, 288, 350, 550, 715], ['S', 420, 1153, 888, 1088, 552],
    ['B', 438, 1038, 775, 975, 605], ['T', 582, 1008, 770, 945, 742], ['B', 654, 1145, 882, 1080, 745],
    ['T', 672, 1083, 820, 1020, 818], ['B', 708, 978, 715, 915, 582], ['B', 726, 1124, 860, 1060, 722],
    ['T', 798, 1200, 935, 1140, 937], ['B', 816, 1287, 1022, 1225, 832], ['B', 834, 1338, 1075, 1275, 1003],
    ['B', 960, 1874, 1612, 1812, 1502], ['B', 1122, 1770, 1506, 1706, 1433], ['T', 1140, 1786, 1560, 1740, 1433],
    ['B', 1158, 1740, 1476, 1680, 1430], ['T', 1176, 1692, 1464, 1630, 1428], ['B', 1194, 1552, 1290, 1490, 1207],
    ['B', 1212, 1540, 1310, 1480, 1207], ['B', 1248, 1572, 1308, 1510, 1257], ['B', 1284, 1701, 1438, 1638, 1345],
    ['T', 1320, 1760, 1497, 1697, 1498],
    ['T', 1410, 2064, 1820, 2000, 1800], ['T', 1464, 2052, 1825, 1990, 1788], ['B', 1482, 2169, 1905, 2105, 1800],
    ['S', 1446, 1376, 1440, 1640, 1712], ['S', 1536, 1476, 1540, 1740, 1798], ['S', 1644, 1419, 1482, 1682, 1747],
    ['T', 1680, 2145, 1882, 2082, 1880], ['B', 1878, 1758, 1822, 2022, 2103], ['B', 1950, 1835, 1968, 2100, 2195],
    ['S', 1968, 1812, 1875, 2075, 2140], ['B', 1986, 1857, 1970, 2120, 2205], ['T', 2004, 1908, 1970, 2140, 2168],
    ['B', 2076, 1914, 1977, 2177, 2290], ['B', 2292, 1678, 1813, 1943, 2065], ['S', 2328, 1748, 1813, 2013, 2065],
    ['B', 2454, 1689, 1752, 1952, 2015], ['B', 2706, 1712, 1776, 1981, 2039], ['B', 2742, 2377, 2148, 2314, 1887],
    ['S', 2778, 1596, 1659, 1859, 1949], ['B', 2904, 1645, 1707, 1909, 2081], ['B', 3066, 1759, 1822, 2021, 2120],
    ['B', 3174, 1782, 1845, 2048, 2126], ['S', 3696, 1002, 1065, 1265, 1496], ['B', 3714, 1899, 1637, 1831, 1560]
];
const marks = document.getElementById('marks');
MARKS.forEach(([type, x, y, from, to, dot]) => {
    add(marks, 'circle', { cx: x, cy: dot, r: 21, fill: COLORS[type], opacity: 0.8 });
    add(marks, 'path', { class: 'stem', d: `M${x} ${from}V${to}`, stroke: COLORS[type] });
    const g = add(marks, 'g', { class: 'badge' });
    add(g, 'rect', { x: x - 57, y: y - 57, width: 114, height: 114, rx: 20, fill: COLORS[type] });
    add(g, 'text', { x: x, y: y + 39 }, type);
});

// OBV
const obv = [
    [0, 0, '37,552 52,660 66,725 81,820 96,700 110,608 125,668 140,528 155,660 169,758 184,625 199,700 213,775 228,872 243,778 257,857 272,720 287,598 302,740 316,840 331,943 346,845 360,925 375,856 390,955 405,850 419,766 434,790 448,848 463,740 478,637 492,703 507,556 522,690 537,782 551,590 566,380 581,530 595,650 610,720 625,782 640,732 654,792 669,708 684,772 698,732 713,770 728,820 742,880 757,815 772,865 786,916 801,820 816,940 830,1000 845,1052 860,1010 875,955 890,990 905,1013 919,1033 934,1015 948,985 963,940 978,890 993,855 1007,812 1022,845 1045,882 1070,920 1095,955 1110,980 1125,1010 1140,1040 1154,1065 1169,1075 1184,1100 1199,1070 1213,1097 1228,1072 1243,1087 1257,1073 1272,1080 1287,1063 1301,1085 1316,1062 1331,1015 1345,988 1360,1010 1375,1030 1390,1050 1404,1080 1419,1055 1434,1075 1448,1100 1463,1115 1478,1133 1492,1103 1507,1127 1522,1095 1537,1078'],
    [1519, 0, '32,1067 50,1095 76,1120 92,1083 106,1105 120,1080 135,1052 150,1068 165,1040 180,1067 194,1040 209,1067 224,1022 238,985 253,930 268,880 282,835 297,868 311,886 326,865 341,905 355,853 371,898 385,875 399,797 414,825 429,862 444,842 458,862 473,884 488,850 503,885 517,910 532,940 547,915 562,940 577,970 591,995 606,1015 620,1034 635,990 650,955 664,888 679,908 694,845 708,818 723,910 738,860 752,785 767,730 781,650 797,745 811,800 825,838 840,880 855,940 870,985 885,1015 899,1062 914,1110 929,1078 944,1105 958,1098 973,1075 988,1027 1003,1075 1017,1147 1032,1085 1047,1035 1061,1070 1076,1105 1091,1075 1105,995 1120,1027 1135,1062 1150,1075 1164,1102 1179,1130 1194,1102 1208,1123 1223,1085 1237,1042 1252,1065 1267,1015 1282,965 1297,915 1311,850 1326,752 1341,823 1355,768 1370,650 1385,575 1399,485 1414,575 1428,480 1443,545 1458,593 1473,560 1487,497 1502,375 1517,295 1531,270']
];
const maobv = [
    [0, 0, '37,632 66,622 90,618 110,608 140,595 169,582 199,575 228,579 272,579 300,570 316,570 331,585 346,612 360,645 375,680 390,705 405,722 434,743 463,760 492,762 520,755 545,757 566,747 610,747 650,753 670,747 705,742 745,757 775,753 800,750 830,757 870,775 895,782 960,832 985,838 1010,862 1045,885 1085,897 1180,950 1245,984 1270,990 1290,990 1330,997 1385,996 1415,1005 1470,1038 1510,1058'],
    [1519, 0, '0,1063 32,1073 80,1077 150,1077 210,1073 265,1063 300,1048 320,1042 370,1020 410,990 445,970 500,945 545,925 590,915 625,913 665,905 710,898 745,899 780,883 820,876 870,884 910,905 950,925 1000,940 1040,950 1070,952 1120,965 1175,992 1210,1022 1240,1045 1265,1058 1290,1062 1310,1057 1345,1038 1375,1010 1400,975 1440,930 1485,872 1531,793']
];
const obvSvg = document.getElementById('obv');
add(obvSvg, 'path', { class: 'obv-frame', d: 'M31 271H3055V1148H31Z' });
add(obvSvg, 'polyline', { class: 'obv-line', points: joinSegments(obv), stroke: '#262626' });
add(obvSvg, 'polyline', { class: 'obv-line', points: joinSegments(maobv), stroke: '#ecc52a' });

// 时间刻度, 左侧渐隐
const ticks = document.getElementById('ticks');
for (let i = 31; i < 206; i++) {
    const major = i === 67 || i === 136 || i === 205;
    add(ticks, 'rect', {
        x: 13 + i * 6, y: 2, width: major ? 4 : 2, height: major ? 17 : 11,
        fill: major ? '#666' : '#888', opacity: Math.min(1, (i - 30) / 12)
    });
}
```
